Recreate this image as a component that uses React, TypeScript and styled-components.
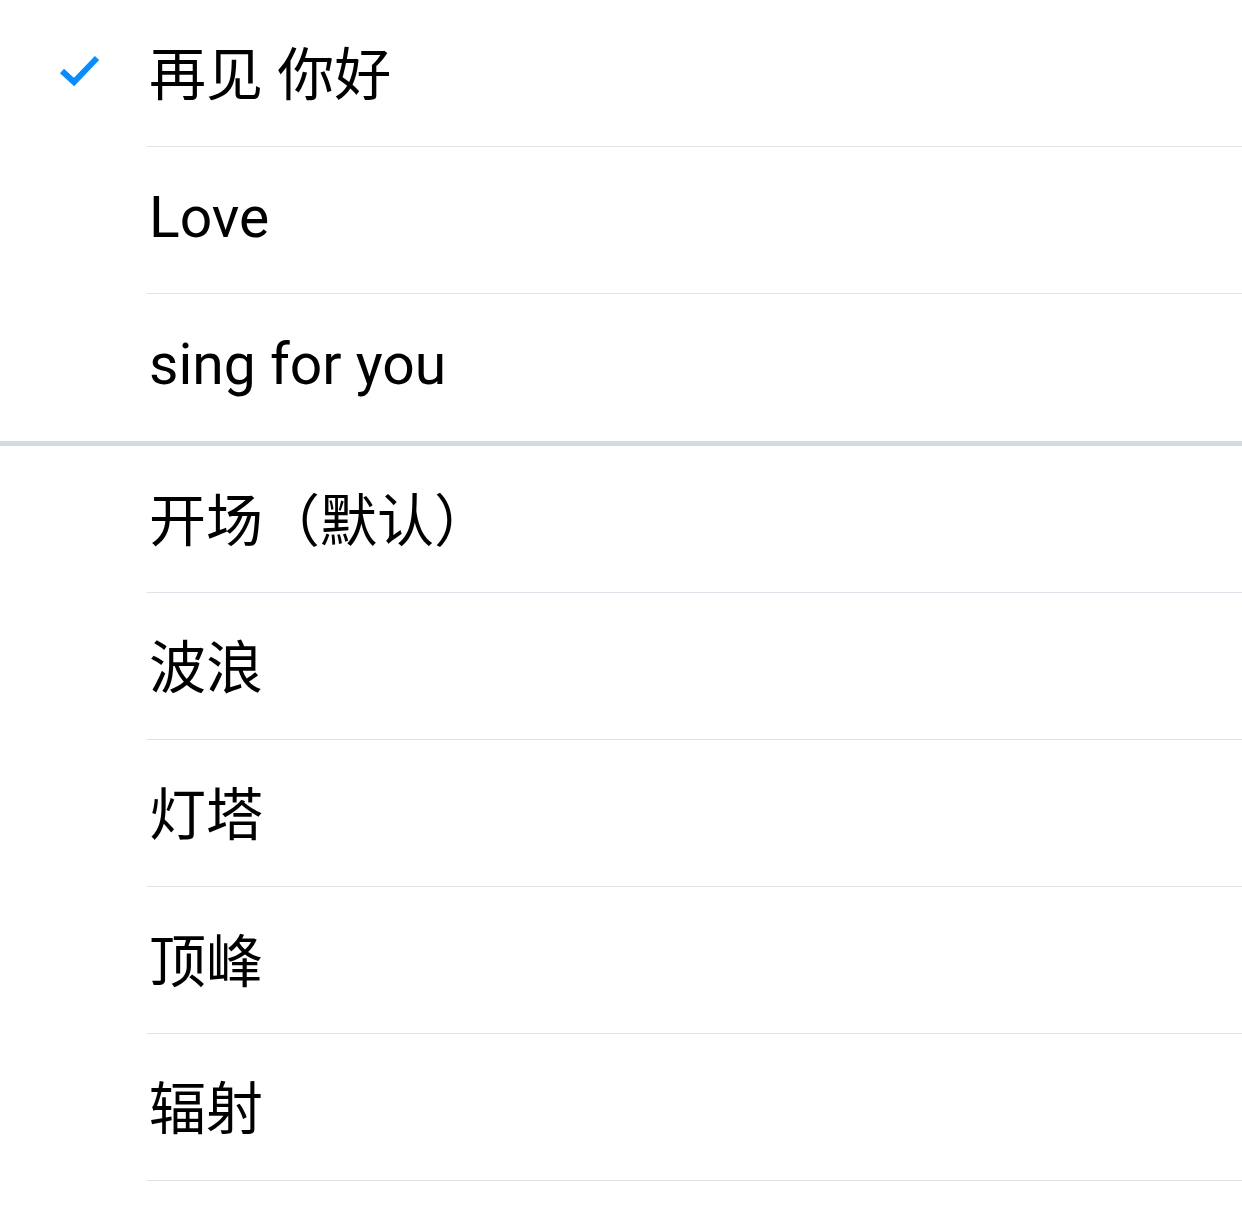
import React from 'react'
import styled, { createGlobalStyle } from 'styled-components'

const GlobalStyle = createGlobalStyle`
    body {
        margin: 0;
        background: #fff;
        font-family: Roboto, "Noto Sans CJK SC", sans-serif;
    }
`

const List = styled.div`
    display: flex;
    flex-direction: column;
    background: #fff;
`

const Group = styled.div`
    display: flex;
    flex-direction: column;
`

const GroupDivider = styled.div`
    height: 5px;
    background: #d3dbe6;
`

const Row = styled.div`
    display: flex;
    align-items: stretch;
    height: 147px;
`

const CheckCell = styled.div`
    display: flex;
    align-items: center;
    justify-content: center;
    width: 147px;
    flex-shrink: 0;
    padding-left: 12px;
    padding-bottom: 6px;
    box-sizing: border-box;
`

const Label = styled.div<{ divider: boolean }>`
    flex: 1;
    display: flex;
    align-items: center;
    padding-left: 2px;
    padding-bottom: 6px;
    box-sizing: border-box;
    border-bottom: ${(props) => props.divider ? '1px solid #dde2e9' : 'none'};
    font-size: 57px;
    color: #000;
`

const Check = () => (
    <svg width="42" height="34" viewBox="0 0 42 34">
        <polyline
            points="3,17 15,28 38,4"
            fill="none"
            stroke="#0a8cff"
            strokeWidth="6"
            strokeLinejoin="miter"
        />
    </svg>
)

const styles = ['再见 你好', 'Love', 'sing for you']
const effects = ['开场（默认）', '波浪', '灯塔', '顶峰', '辐射']

const App = () => {
    return (
        <List>
            <GlobalStyle />
            <Group>
                {styles.map((name, i) => (
                    <Row key={name}>
                        <CheckCell>{i === 0 && <Check />}</CheckCell>
                        <Label divider={i < styles.length - 1}>{name}</Label>
                    </Row>
                ))}
            </Group>
            <GroupDivider />
            <Group>
                {effects.map((name) => (
                    <Row key={name}>
                        <CheckCell />
                        <Label divider>{name}</Label>
                    </Row>
                ))}
            </Group>
        </List>
    )
}

export default App
